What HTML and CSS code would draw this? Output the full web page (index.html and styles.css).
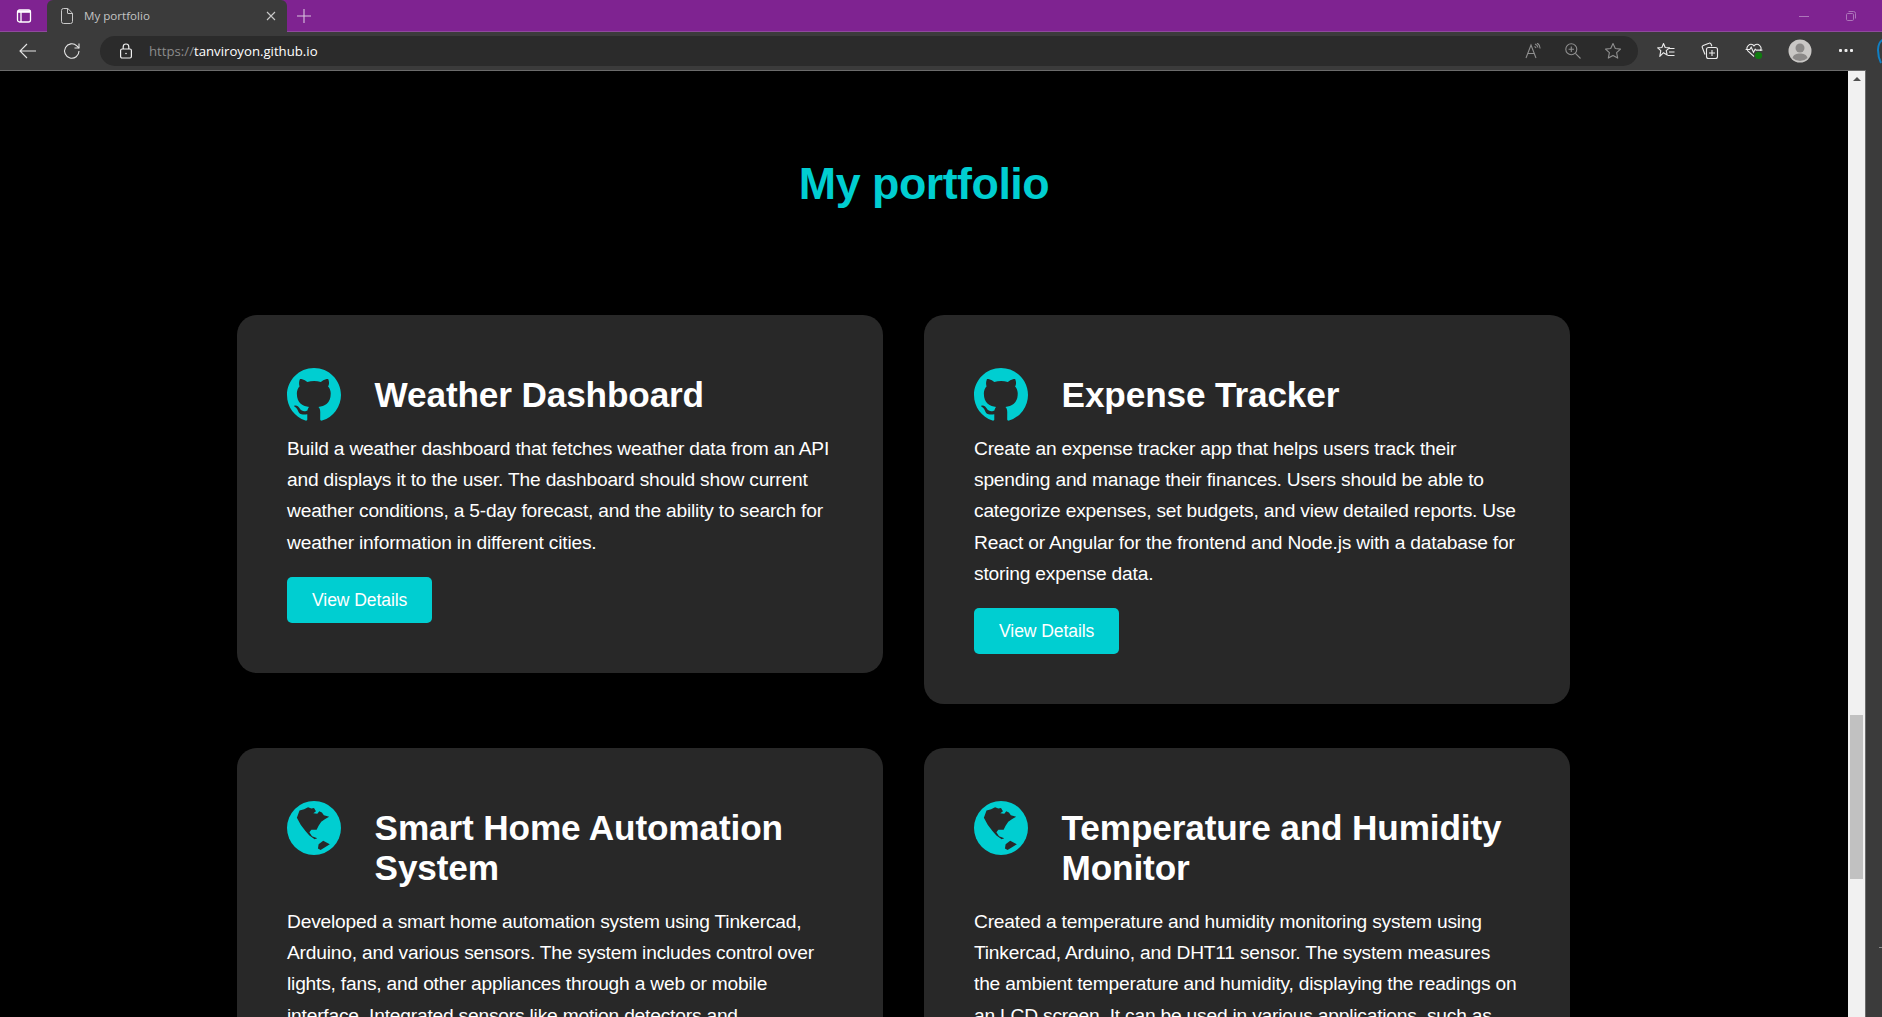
FILE: index.html
```html
<!DOCTYPE html>
<html lang="en">

<head>
    <meta charset="UTF-8">
    <meta name="viewport" content="width=device-width, initial-scale=1.0">
    <title>My portfolio</title>
    <link rel="stylesheet" href="styles.css">
</head>

<body>
    <svg class="defs" aria-hidden="true">
        <symbol id="github" viewBox="0 0 16 16">
            <path fill="#00ced1" d="M8 0C3.58 0 0 3.58 0 8c0 3.54 2.29 6.53 5.47 7.59.4.07.55-.17.55-.38 0-.19-.01-.82-.01-1.49-2.01.37-2.53-.49-2.69-.94-.09-.23-.48-.94-.82-1.13-.28-.15-.68-.52-.01-.53.63-.01 1.08.58 1.23.82.72 1.21 1.87.87 2.33.66.07-.52.28-.87.51-1.07-1.78-.2-3.64-.89-3.64-3.95 0-.87.31-1.59.82-2.15-.08-.2-.36-1.02.08-2.12 0 0 .67-.21 2.2.82.64-.18 1.32-.27 2-.27.68 0 1.36.09 2 .27 1.53-1.04 2.2-.82 2.2-.82.44 1.1.16 1.92-.08 2.12.51.56.82 1.27.82 2.15 0 3.07-1.87 3.75-3.65 3.95.29.25.54.73.54 1.48 0 1.07-.01 1.93-.01 2.2 0 .21.15.46.55.38A8.013 8.013 0 0016 8c0-4.42-3.58-8-8-8z" />
        </symbol>
        <symbol id="globe" viewBox="48 37 164 164">
            <circle cx="130" cy="119" r="82" fill="#00ced1" />
            <path fill="#282828" d="M78 88L86 66 100 62 112 56 122 60 130 58 136 68 128 74 140 76 146 68 154 72 160 80 176 85 164 92 152 100 144 112 138 124 122 124 116 132 124 144 140 150 132 153 116 142 104 128 90 110z" />
            <path fill="#282828" d="M144 168L158 158 178 168 166 176 150 186 142 181z" />
        </symbol>
    </svg>

    <!-- browser window -->
    <div class="tabbar">
        <div class="tab-toggle">
            <svg width="16" height="16" viewBox="0 0 16 16" fill="none" stroke="#fff" stroke-width="1.3">
                <rect x="1.5" y="2" width="13" height="12" rx="2" />
                <path d="M1.5 3.6h13" stroke-width="2.4" />
                <path d="M5 4v10" />
            </svg>
        </div>
        <div class="tab">
            <svg width="14" height="16" viewBox="0 0 14 16" fill="none" stroke="#c9c9c9">
                <path d="M1.5 2.5a2 2 0 0 1 2-2h4.3l4.7 4.7v8.3a2 2 0 0 1-2 2h-7a2 2 0 0 1-2-2z" />
                <path d="M7.5 .5v4.5a.5.5 0 0 0 .5.5h4.5" />
            </svg>
            <span class="tab-title">My portfolio</span>
            <svg width="10" height="10" viewBox="0 0 10 10" stroke="#c9c9c9" stroke-width="1.1">
                <path d="M1 1l8 8M9 1l-8 8" />
            </svg>
        </div>
        <div class="new-tab">
            <svg width="14" height="14" viewBox="0 0 14 14" stroke="#d9c4de" stroke-width="1.1">
                <path d="M7 0v14M0 7h14" />
            </svg>
        </div>
        <div class="window-buttons">
            <div class="window-button">
                <svg width="10" height="10" viewBox="0 0 10 10" stroke="#ad75ba">
                    <path d="M0 5.5h10" />
                </svg>
            </div>
            <div class="window-button">
                <svg width="10" height="10" viewBox="0 0 10 10" fill="none" stroke="#ad75ba">
                    <rect x=".5" y="2.5" width="7" height="7" rx="1.2" />
                    <path d="M2.5 .5h5a2 2 0 0 1 2 2v5" />
                </svg>
            </div>
        </div>
    </div>

    <div class="toolbar">
        <div class="tool nav-tool">
            <svg width="18" height="16" viewBox="0 0 18 16" fill="none" stroke="#e6e6e6" stroke-width="1.1">
                <path d="M1 8h16M8 1L1 8l7 7" />
            </svg>
        </div>
        <div class="tool nav-tool">
            <svg width="18" height="18" viewBox="0 0 18 18" fill="none" stroke="#e6e6e6" stroke-width="1.1">
                <path d="M16 9a7.2 7.2 0 1 1-2.2-5.2L16 6" />
                <path d="M16 1.5V6h-4.5" />
            </svg>
        </div>
        <div class="address">
            <svg class="lock" width="14" height="16" viewBox="0 0 14 16" fill="none" stroke="#f0f0f0" stroke-width="1.2">
                <rect x="1.6" y="6" width="10.8" height="9" rx="1.5" />
                <path d="M4.2 6V3.8a2.8 2.8 0 0 1 5.6 0V6" />
                <circle cx="7" cy="10.5" r=".8" fill="#f0f0f0" stroke="none" />
            </svg>
            <div class="url"><span class="url-scheme">https://</span>tanviroyon.github.io</div>
            <div class="address-tools">
                <div class="tool address-tool">
                    <svg class="read-icon" width="16" height="16" viewBox="-1 0 16 16" fill="none" stroke="#8f8f8f" stroke-width="1.1">
                        <path d="M0 15L5 2l5 13M1.700 10.500h6.600" />
                        <path d="M9 1a4.500 4.500 0 0 1 3 3.500M8.500 3.500a2.500 2.500 0 0 1 1.500 1.500M11 0a6 6 0 0 1 3 5.500" />
                    </svg>
                </div>
                <div class="tool address-tool">
                    <svg class="zoom-icon" width="16" height="16" viewBox="0 0 16 16" fill="none" stroke="#8f8f8f" stroke-width="1.1">
                        <circle cx="6.3" cy="6.3" r="5.5" />
                        <path d="M3.6 6.3h5.4M6.3 3.6V9M10.4 10.4l5.1 5.1" />
                    </svg>
                </div>
                <div class="tool address-tool">
                    <svg width="18" height="18" viewBox="0 0 18 18" fill="none" stroke="#8f8f8f" stroke-width="1.1" stroke-linejoin="round">
                        <path d="M9 1.5l2.3 5 5.2.6-3.9 3.6 1.1 5.4L9 13.4l-4.7 2.7 1.1-5.4L1.500 7.100l5.200-.6z" />
                    </svg>
                </div>
            </div>
        </div>
        <div class="tool app-tool">
            <svg width="18" height="18" viewBox="0 0 18 18" fill="none" stroke="#ededed" stroke-width="1.1" stroke-linejoin="round">
                <path d="M6.500 1.500l1.700 4 4.300.4-3.300 2.800 1 4.300-3.700-2.300-3.700 3.600 1-5.600L.7 5.900l4.200-.4z" />
                <path d="M12 6.500h5.500M12 10h5.500M10.500 13.500h7" />
            </svg>
        </div>
        <div class="tool app-tool">
            <svg width="18" height="18" viewBox="0 0 18 18" fill="none" stroke="#ededed" stroke-width="1.1">
                <path d="M4 12.500L1.300 5.500a1.500 1.500 0 0 1 .9-2L8 1.200a1.500 1.500 0 0 1 2 .8l.9 2.300" />
                <rect x="5.500" y="5.500" width="11" height="11" rx="2" />
                <path d="M11 8v6M8 11h6" />
            </svg>
        </div>
        <div class="tool app-tool">
            <svg width="18" height="18" viewBox="0 0 18 18" fill="none" stroke="#ededed" stroke-width="1.1">
                <path d="M9 14.500L2.800 8.800A4 4 0 0 1 8.500 3.300l.5.600.5-.6a4 4 0 0 1 5.700 5.500" />
                <path d="M.6 7.500h4.200l1.400-2.300 2.300 5 1.700-3 1 .9h6.200" />
                <circle cx="13.500" cy="13.500" r="3.600" fill="#107c10" stroke="none" />
            </svg>
        </div>
        <div class="tool profile-tool">
            <svg width="24" height="24" viewBox="0 0 24 24">
                <circle cx="12" cy="12" r="11.500" fill="#c9c7c5" />
                <circle cx="12" cy="9" r="4.500" fill="#8b8988" />
                <path fill="#8b8988" d="M4.500 19c1-3.500 4-4.500 7.500-4.500s6.500 1 7.500 4.500a11 11 0 0 1-15 0z" />
            </svg>
        </div>
        <div class="tool more-tool">
            <svg width="14" height="4" viewBox="0 0 14 4" fill="#ededed">
                <rect x="0" y="0" width="3" height="3" rx="1" />
                <rect x="5.500" y="0" width="3" height="3" rx="1" />
                <rect x="11" y="0" width="3" height="3" rx="1" />
            </svg>
        </div>
        <svg class="edge-logo" width="8" height="26" viewBox="0 0 8 26" fill="none" stroke="#0f7fc4" stroke-width="2">
            <path d="M7 1C3 3 1 7 1 12c0 4 1 9 3 13" />
        </svg>
    </div>

    <div class="browser-body">
        <div class="viewport">
            <main class="page">
                <h1 class="page-title">My portfolio</h1>
                <div class="project-grid">
                    <article class="card">
                        <div class="card-head">
                            <svg class="card-icon"><use href="#github" /></svg>
                            <h2 class="card-title">Weather Dashboard</h2>
                        </div>
                        <p class="card-text">Build a weather dashboard that fetches weather data from an API and displays it to the user. The dashboard should show current weather conditions, a 5-day forecast, and the ability to search for weather information in different cities.</p>
                        <a class="details-btn" href="#">View Details</a>
                    </article>
                    <article class="card">
                        <div class="card-head">
                            <svg class="card-icon"><use href="#github" /></svg>
                            <h2 class="card-title">Expense Tracker</h2>
                        </div>
                        <p class="card-text">Create an expense tracker app that helps users track their spending and manage their finances. Users should be able to categorize expenses, set budgets, and view detailed reports. Use React or Angular for the frontend and Node.js with a database for storing expense data.</p>
                        <a class="details-btn" href="#">View Details</a>
                    </article>
                    <article class="card">
                        <div class="card-head">
                            <svg class="card-icon"><use href="#globe" /></svg>
                            <h2 class="card-title">Smart Home Automation System</h2>
                        </div>
                        <p class="card-text">Developed a smart home automation system using Tinkercad, Arduino, and various sensors. The system includes control over lights, fans, and other appliances through a web or mobile interface. Integrated sensors like motion detectors and temperature sensors.</p>
                        <a class="details-btn" href="#">View Details</a>
                    </article>
                    <article class="card">
                        <div class="card-head">
                            <svg class="card-icon"><use href="#globe" /></svg>
                            <h2 class="card-title">Temperature and Humidity Monitor</h2>
                        </div>
                        <p class="card-text">Created a temperature and humidity monitoring system using Tinkercad, Arduino, and DHT11 sensor. The system measures the ambient temperature and humidity, displaying the readings on an LCD screen. It can be used in various applications, such as home automation.</p>
                        <a class="details-btn" href="#">View Details</a>
                    </article>
                </div>
            </main>
            <div class="scrollbar">
                <div class="scroll-up"></div>
                <div class="scroll-thumb"></div>
            </div>
        </div>
        <div class="side-panel">
            <div class="side-tick"></div>
        </div>
    </div>
</body>

</html>
```

FILE: styles.css
```css
html,
body {
    height: 100%;
}

body {
    margin: 0;
    overflow: hidden;
    display: flex;
    flex-direction: column;
    background: #3b3b3b;
    font-family: 'Liberation Sans', Arial, sans-serif;
}

.defs {
    display: none;
}

/* browser chrome */
.tabbar {
    flex: none;
    height: 32px;
    box-sizing: border-box;
    display: flex;
    align-items: flex-end;
    background: #7f2391;
    border-bottom: 1px solid #8e4a9c;
}

.tab-toggle {
    width: 47px;
    height: 31px;
    display: flex;
    align-items: center;
    justify-content: center;
}

.tab {
    width: 240px;
    height: 32px;
    margin-bottom: -1px;
    box-sizing: border-box;
    padding: 0 11px 0 13px;
    display: flex;
    align-items: center;
    background: #3b3b3b;
    border-radius: 6px 6px 0 0;
}

.tab-title {
    flex: 1;
    margin-left: 10px;
    padding-bottom: 2px;
    color: #c4c4c4;
    font-family: 'Open Sans', sans-serif;
    font-size: 11.6px;
}

.new-tab {
    width: 22px;
    height: 31px;
    margin-left: 6px;
    display: flex;
    align-items: center;
    justify-content: center;
}

.window-buttons {
    margin-left: auto;
    padding-right: 8px;
    display: flex;
}

.window-button {
    width: 47px;
    height: 31px;
    display: flex;
    align-items: center;
    justify-content: center;
}

.toolbar {
    flex: none;
    height: 38px;
    display: flex;
    align-items: center;
    overflow: hidden;
    background: #3b3b3b;
}

.tool {
    height: 30px;
    flex: none;
    display: flex;
    align-items: center;
    justify-content: center;
}

.nav-tool {
    width: 44px;
}

.nav-tool:first-child {
    margin-left: 6px;
}

.address {
    flex: none;
    width: 1538px;
    height: 30px;
    margin: 0 6px;
    box-sizing: border-box;
    padding: 0 5px 0 19px;
    display: flex;
    align-items: center;
    background: #2b2b2b;
    border-radius: 15px;
}

.url {
    flex: 1;
    margin-left: 16px;
    color: #ffffff;
    font-family: 'Open Sans', sans-serif;
    font-size: 13.2px;
}

.url-scheme {
    color: #8c8c8c;
}

.address-tools {
    display: flex;
}

.address-tool {
    width: 41px;
}

.read-icon {
    margin-left: 4px;
}

.zoom-icon {
    margin-left: 2px;
}

.app-tool {
    width: 44px;
}

.profile-tool {
    width: 46px;
    margin-left: 1px;
}

.more-tool {
    width: 46px;
}

.edge-logo {
    flex: none;
    margin-left: 8px;
}

.browser-body {
    flex: 1;
    min-height: 0;
    display: flex;
}

.viewport {
    flex: 1;
    min-width: 0;
    display: flex;
    border-top: 1px solid #6b6b6b;
    border-right: 1px solid #6b6b6b;
}

.scrollbar {
    flex: none;
    width: 17px;
    background: #f1f1f1;
}

.scroll-up {
    width: 0;
    height: 0;
    margin: 6px auto 0;
    border-left: 4px solid transparent;
    border-right: 4px solid transparent;
    border-bottom: 4px solid #505050;
}

.scroll-thumb {
    width: 13px;
    height: 164px;
    margin: 634px auto 0;
    background: #c1c1c1;
}

.side-panel {
    flex: none;
    width: 16px;
    display: flex;
    justify-content: flex-end;
}

.side-tick {
    width: 3px;
    height: 1px;
    margin-top: 877px;
    background: #8a8a8a;
}

/* page */
.page {
    flex: 1;
    min-width: 0;
    overflow: hidden;
    background: #000000;
}

.page-title {
    margin: 87px 0 106px;
    text-align: center;
    color: #00ced1;
    font-size: 44.8px;
    font-weight: bold;
    letter-spacing: -0.5px;
}

.project-grid {
    width: 1333px;
    margin-left: 237px;
    display: grid;
    grid-template-columns: 646px 646px;
    column-gap: 41px;
    row-gap: 44px;
    align-items: start;
}

.card {
    padding: 53px 50px 50px;
    background: #282828;
    border-radius: 20px;
    color: #ffffff;
}

.card-head {
    display: flex;
    align-items: flex-start;
    margin-bottom: 18px;
}

.card-icon {
    flex: none;
    width: 54px;
    height: 54px;
    margin: 0 33.6px -7px 0;
}

.card-title {
    margin: 0;
    padding-top: 7px;
    font-size: 35.2px;
    line-height: 40px;
    font-weight: bold;
    letter-spacing: -0.14px;
}

.card-text {
    margin: 0 0 19px;
    font-size: 19.2px;
    line-height: 31.2px;
    letter-spacing: -0.2px;
}

.details-btn {
    display: inline-block;
    height: 46px;
    padding: 0 25px;
    line-height: 46px;
    background: #00ced1;
    color: #ffffff;
    border-radius: 5px;
    font-size: 17.6px;
    letter-spacing: -0.1px;
    text-decoration: none;
}
```
